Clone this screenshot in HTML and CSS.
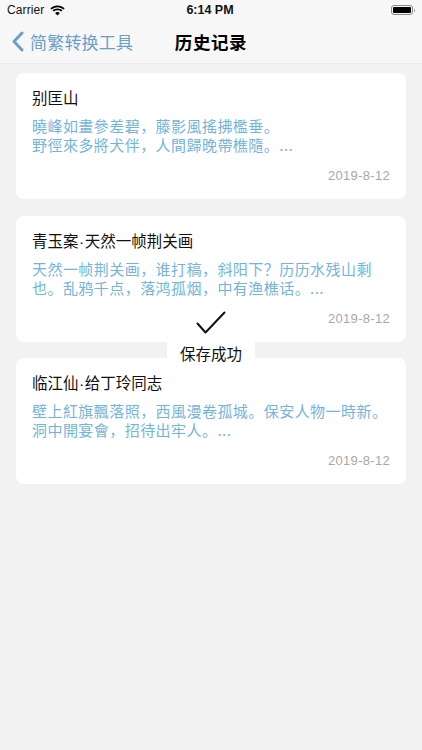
FILE: index.html
```html
<!DOCTYPE html>
<html lang="zh">
<head>
<meta charset="utf-8">
<link rel="stylesheet" href="styles.css">
</head>
<body>
<div class="screen">
  <header class="top">
    <div class="status">
      <div class="status-left">
        <span class="carrier">Carrier</span>
        <svg class="wifi" width="15" height="11" viewBox="0 0 15 11">
          <path d="M7.5 2.2c2.3 0 4.4.9 6 2.4l1.2-1.3C12.8 1.4 10.3.4 7.5.4S2.2 1.4.3 3.3l1.2 1.3c1.6-1.5 3.7-2.4 6-2.4z" fill="#000"/>
          <path d="M7.5 5.2c1.4 0 2.7.5 3.7 1.4l1.2-1.3C11.1 4.1 9.4 3.4 7.5 3.4S3.9 4.1 2.6 5.3l1.2 1.3c1-.9 2.3-1.4 3.7-1.4z" fill="#000"/>
          <path d="M7.5 10.6 9.9 8c-.6-.6-1.5-1-2.4-1s-1.8.4-2.4 1z" fill="#000"/>
        </svg>
      </div>
      <span class="time">6:14 PM</span>
      <div class="battery"><div class="battery-fill"></div></div>
    </div>
    <nav class="navbar">
      <div class="back">
        <svg class="chev" width="12" height="21" viewBox="0 0 12 21">
          <path d="M10 2 2 10.5 10 19" fill="none" stroke="#6a9fc8" stroke-width="3" stroke-linecap="round" stroke-linejoin="round"/>
        </svg>
        <span class="back-text">简繁转换工具</span>
      </div>
      <h1 class="nav-title">历史记录</h1>
    </nav>
  </header>

  <main class="list">
    <article class="card">
      <h2 class="card-title">别匡山</h2>
      <p class="poem">曉峰如畫參差碧，藤影風搖拂檻垂。<br>野徑來多將犬伴，人間歸晚帶樵隨。...</p>
      <div class="date">2019-8-12</div>
    </article>
    <article class="card">
      <h2 class="card-title">青玉案<span class="dot">·</span>天然一帧荆关画</h2>
      <p class="poem">天然一帧荆关画，谁打稿，斜阳下？历历水残山剩<br>也。乱鸦千点，落鸿孤烟，中有渔樵话。...</p>
      <div class="date">2019-8-12</div>
    </article>
    <article class="card">
      <h2 class="card-title">临江仙<span class="dot">·</span>给丁玲同志</h2>
      <p class="poem">壁上紅旗飄落照，西風漫卷孤城。保安人物一時新。<br>洞中開宴會，招待出牢人。...</p>
      <div class="date">2019-8-12</div>
    </article>
  </main>

  <div class="toast">
    <svg class="check" width="30" height="24" viewBox="0 0 30 24">
      <path d="M1.5 12.5 9.5 21.5 28.5 1.5" fill="none" stroke="#111" stroke-width="2" stroke-linecap="round" stroke-linejoin="round"/>
    </svg>
    <span class="toast-text">保存成功</span>
  </div>
</div>
</body>
</html>
```

FILE: styles.css
```css
* { box-sizing: border-box; }
html, body { margin: 0; padding: 0; }
body {
  background: #f2f2f2;
  font-family: "Noto Sans CJK SC", "Noto Sans", "Liberation Sans", sans-serif;
  color: #111;
}
.screen {
  position: relative;
  width: 422px;
  height: 750px;
  background: #f2f2f2;
  overflow: hidden;
}
.top {
  background: #f7f7f7;
  border-bottom: 1px solid #ececec;
}
.status {
  height: 20px;
  display: grid;
  grid-template-columns: 1fr auto 1fr;
  align-items: center;
  padding: 0 9px 0 7px;
  font-family: "Liberation Sans", Arial, sans-serif;
  font-size: 12px;
}
.status-left { display: flex; align-items: center; gap: 6px; }
.carrier { letter-spacing: 0.1px; }
.wifi { display: block; }
.time { font-weight: bold; font-size: 12.5px; }
.battery {
  justify-self: end;
  width: 22px;
  height: 10px;
  border: 1px solid #888;
  border-radius: 3px;
  padding: 1px;
  position: relative;
}
.battery::after {
  content: "";
  position: absolute;
  right: -3px;
  top: 2.5px;
  width: 1.5px;
  height: 3.5px;
  background: #999;
  border-radius: 0 1px 1px 0;
}
.battery-fill { width: 100%; height: 100%; background: #000; border-radius: 1px; }
.navbar {
  height: 43px;
  position: relative;
  display: flex;
  align-items: center;
  justify-content: center;
}
.back {
  position: absolute;
  left: 12px;
  top: 0;
  height: 43px;
  display: flex;
  align-items: center;
  gap: 6px;
}
.chev { display: block; }
.back-text {
  font-size: 17px;
  color: #6a9fc8;
  letter-spacing: 0.2px;
}
.nav-title {
  margin: 0;
  font-size: 17.5px;
  font-weight: 600;
  letter-spacing: 0.6px;
  color: #000;
}
.list {
  padding: 9px 16px 0;
  display: flex;
  flex-direction: column;
  gap: 16.5px;
}
.card {
  background: #fff;
  border-radius: 8px;
  height: 126px;
  padding: 14px 16px 0;
  display: flex;
  flex-direction: column;
}
.card-title {
  margin: 0;
  height: 20px;
  line-height: 20px;
  font-size: 15.5px;
  font-weight: 400;
  color: #111;
}
.dot {
  font-family: "Liberation Sans", Arial, sans-serif;
  margin: 0 0.5px;
}
.poem {
  margin: 9px 0 0;
  font-size: 15px;
  letter-spacing: 0.45px;
  line-height: 19px;
  color: #74b4da;
  white-space: nowrap;
}
.date {
  margin-top: 14px;
  align-self: flex-end;
  font-family: "Liberation Sans", Arial, sans-serif;
  font-size: 13px;
  line-height: 16px;
  color: #a8a8a8;
  letter-spacing: 0.3px;
}
.toast {
  position: absolute;
  left: 167px;
  top: 300px;
  width: 88px;
  height: 74px;
  background: #fff;
  border-radius: 6px;
  display: flex;
  flex-direction: column;
  align-items: center;
  padding-top: 11px;
}
.check { display: block; }
.toast-text {
  margin-top: 7px;
  font-size: 15.5px;
  line-height: 22px;
  color: #111;
}
```
